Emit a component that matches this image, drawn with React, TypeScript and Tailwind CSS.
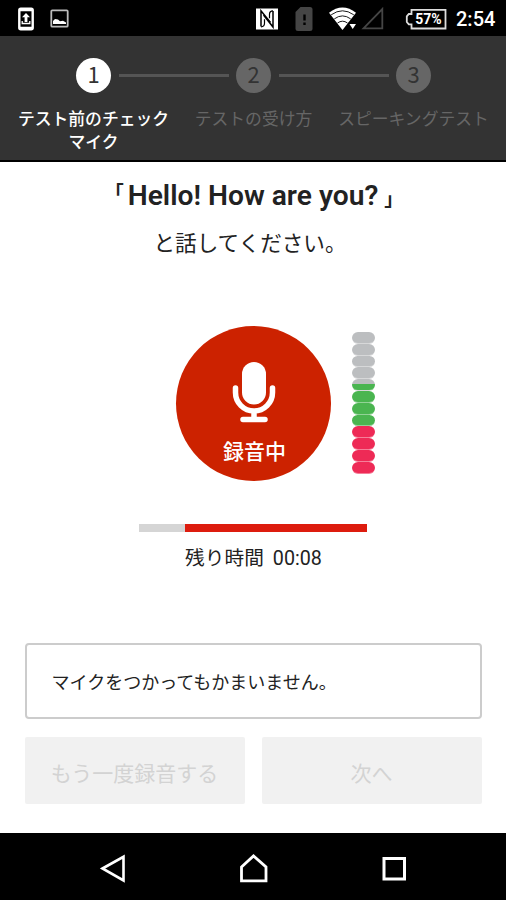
import React from "react";
import clsx from "clsx";

type StepProps = {
  number: number;
  lines: string[];
  active?: boolean;
};

const steps: StepProps[] = [
  { number: 1, lines: ["テスト前のチェック", "マイク"], active: true },
  { number: 2, lines: ["テストの受け方"] },
  { number: 3, lines: ["スピーキングテスト"] },
];

const levels = [
  "bg-[#bcbec0]",
  "bg-[#bcbec0]",
  "bg-[#bcbec0]",
  "bg-[#bcbec0]",
  "bg-linear-to-b from-[#bcbec0] from-50% to-[#4ab550] to-50%",
  "bg-[#4ab550]",
  "bg-[#4ab550]",
  "bg-[#4ab550]",
  "bg-[#ee2a56]",
  "bg-[#ee2a56]",
  "bg-[#ee2a56]",
  "bg-[#ee2a56]",
];

const StatusBar = () => (
  <div className="flex h-9 shrink-0 items-center bg-black pt-px pr-[11px] pl-[18px] text-white">
    <svg width="16" height="24" viewBox="0 0 16 24">
      <rect x="1.3" y="1.8" width="13.4" height="20.4" rx="1.5" fill="none" stroke="#fff" strokeWidth="2.4" />
      <path d="M2 3.5h12M2 20.5h12" stroke="#fff" strokeWidth="1.6" />
      <path d="M8 6l4 4.3H9.4V15H6.6v-4.7H4z" fill="#fff" />
      <path d="M4.2 14v2.5h7.6V14" fill="none" stroke="#fff" strokeWidth="1.3" />
    </svg>
    <svg className="ml-4" width="19" height="19" viewBox="0 0 19 19">
      <rect x="1.3" y="1.3" width="16.4" height="16.4" rx="1" fill="none" stroke="#bbb" strokeWidth="1.8" />
      <path d="M3 15v-3l2-2 3 .5 2 1.7 3-.4 3 1.7V15z" fill="#fff" />
    </svg>
    <svg className="ml-auto" width="22" height="22" viewBox="0 0 22 22">
      <path d="M0 .5h22v21H0z" fill="#fff" />
      <path d="M5 18.500V2.800L14.500 14.500M17 3V19L7.500 7" fill="none" stroke="#000" strokeWidth="1.5" />
      <path d="M5 18.800q3.500 0 3.500-3.500v-4M17 2.800q-3.500 0-3.500 3.500v4" fill="none" stroke="#000" strokeWidth="1.2" />
    </svg>
    <svg className="ml-4" width="20" height="26" viewBox="0 0 20 26">
      <path d="M6.5 1H16q2.5 0 2.5 2.5v19q0 2.5-2.5 2.5H4q-2.5 0-2.5-2.5V6z" fill="#454545" />
      <path d="M10.5 8.5v6M10.5 16.5V19" stroke="#000" strokeWidth="2.4" />
    </svg>
    <svg className="ml-[14px]" width="29" height="25" viewBox="0 0 29 25">
      <path d="M1 6.8Q14.5-4 28 6.8L14.5 24z" fill="#fff" />
      <path d="M3.2 8.8q11.3-8 22.6 0M6.3 12.9q8.2-6 16.4 0M9.5 17q5-3.6 10 0" fill="none" stroke="#000" strokeWidth=".9" />
      <path d="M20.5 16.5H29V25h-8.5z" fill="#000" />
      <path d="M21.5 18H28l-3.3 5z" fill="#fff" />
    </svg>
    <svg className="ml-1" width="23" height="23" viewBox="0 0 23 23">
      <path d="M2.5 21.3L21.3 2v19.3z" fill="none" stroke="#454545" strokeWidth="1.8" />
    </svg>
    <div className="relative ml-[21px] h-[22px] w-[42px]">
      <svg width="42" height="22" viewBox="0 0 42 22">
        <path d="M6.5 1.8h34v18.7h-34v-4.2H3.8L1.8 14V8.3l2-2.3h2.7z" fill="none" stroke="#ddd" strokeWidth="1.8" />
      </svg>
      <span className="absolute inset-0 pl-[5px] text-center text-[14px] leading-[22px] font-bold">57%</span>
    </div>
    <span className="ml-[9px] w-[39px] text-[20px] leading-none font-medium whitespace-nowrap">2:54</span>
  </div>
);

const Step: React.FC<StepProps> = ({ number, lines, active }) => (
  <div className="flex w-40 flex-col items-center">
    <div
      className={clsx(
        "flex size-[35px] items-center justify-center rounded-full pb-[5px] font-['Noto_Sans_CJK_JP',sans-serif] text-[22px] leading-none text-[#333]",
        active ? "bg-white" : "bg-[#666]"
      )}
    >
      {number}
    </div>
    <div
      className={clsx(
        "mt-[15px] text-center text-[16.8px] leading-[23px] whitespace-nowrap",
        active ? "font-medium text-white" : "text-[#666]"
      )}
    >
      {lines.map((line) => (
        <div key={line}>{line}</div>
      ))}
    </div>
  </div>
);

const StepHeader = () => (
  <div className="relative flex h-[126px] shrink-0 justify-center border-b-2 border-black bg-[#333] pt-[22px] pl-px">
    {steps.map((step) => (
      <Step key={step.number} {...step} />
    ))}
    <div className="absolute top-[38px] left-[119px] h-[3px] w-[110px] bg-[#555]" />
    <div className="absolute top-[38px] left-[279px] h-[3px] w-[110px] bg-[#555]" />
  </div>
);

const RecordButton = () => (
  <button className="flex size-[155px] flex-col items-center rounded-full bg-[#cc2200] pt-9 text-white">
    <svg width="44" height="61" viewBox="0 0 44 61">
      <rect x="10" y="0" width="24" height="42.5" rx="12" fill="#fff" />
      <path d="M3.5 26v4.5a18.5 18.5 0 0 0 37 0V26M22 49v8M11 57.5h22" fill="none" stroke="#fff" strokeWidth="5.5" strokeLinecap="round" />
    </svg>
    <span className="mt-[14px] ml-0.5 text-[21px] leading-[30px] font-medium">録音中</span>
  </button>
);

const LevelMeter = () => (
  <div className="flex w-[23px] flex-col">
    {levels.map((color, i) => (
      <div key={i} className={clsx("h-[11.8px] rounded-[6px] border-b border-white/40", color)} />
    ))}
  </div>
);

const NavBar = () => (
  <div className="flex h-[67px] shrink-0 items-center justify-between bg-black px-[99px] pt-1">
    <svg width="28" height="30" viewBox="0 0 28 30">
      <path d="M3.5 14.5L24.5 2.8v23.6z" fill="none" stroke="#fff" strokeWidth="2.6" />
    </svg>
    <svg width="30" height="30" viewBox="0 0 30 30">
      <path d="M2.5 13l12-11 12.500 11v13.800H2.500z" fill="none" stroke="#fff" strokeWidth="2.8" />
    </svg>
    <svg width="26" height="26" viewBox="0 0 26 26">
      <rect x="3" y="2.5" width="20.5" height="20.5" fill="none" stroke="#fff" strokeWidth="3" />
    </svg>
  </div>
);

const App = () => {
  return (
    <div className="flex h-[900px] w-[506px] flex-col overflow-hidden bg-white font-['Roboto','Noto_Sans_CJK_JP',sans-serif] text-[#222]">
      <StatusBar />
      <StepHeader />

      <div className="flex flex-1 flex-col items-center">
        <h1 className="mt-[14px] flex h-10 items-center pl-0.5 text-[28.2px] leading-10 font-semibold whitespace-nowrap">
          <span className="pb-1 text-[19px] font-bold">「</span>
          <span className="px-1">Hello! How are you?</span>
          <span className="pt-[7px] pl-0.5 text-[19px] font-bold">」</span>
        </h1>
        <p className="mt-[11px] pr-1.5 text-[21.6px] leading-[34px]">と話してください。</p>

        <div className="mt-[65px] flex w-full items-start pl-44">
          <RecordButton />
          <div className="mt-[6px] ml-[21px]">
            <LevelMeter />
          </div>
        </div>

        <div className="mt-[43px] flex h-2 w-[228px] bg-[#dd1c0e]">
          <div className="h-full bg-[#d5d5d5]" style={{ width: "20%" }} />
        </div>
        <div className="mt-3 flex gap-[9px] pl-px text-[19.7px] leading-[30px]">
          <span>残り時間</span>
          <span>00:08</span>
        </div>

        <div className="mt-[69px] flex h-[76px] w-[457px] items-center rounded-[4px] border-2 border-[#ccc] pt-0.5 pl-[25px] text-[18px]">
          マイクをつかってもかまいません。
        </div>
        <div className="mt-[18px] flex w-[457px] justify-between text-[21px] text-[#d3d3d3]">
          <button className="h-[67px] w-[220px] rounded-xs bg-[#f1f1f1] pt-2">もう一度録音する</button>
          <button className="h-[67px] w-[220px] rounded-xs bg-[#f1f1f1] pt-2">次へ</button>
        </div>
      </div>

      <NavBar />
    </div>
  );
};

export default App;
